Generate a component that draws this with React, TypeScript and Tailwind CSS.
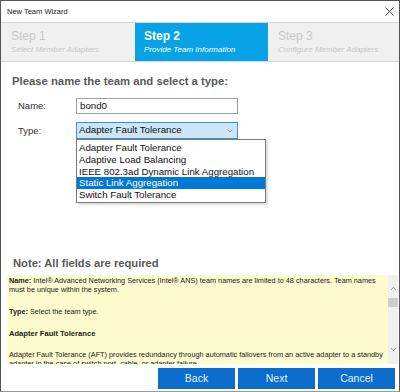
import { ChevronDown, ChevronUp } from "lucide-react";

const teamTypes = [
  "Adapter Fault Tolerance",
  "Adaptive Load Balancing",
  "IEEE 802.3ad Dynamic Link Aggregation",
  "Static Link Aggregation",
  "Switch Fault Tolerance",
];

const steps = [
  { title: "Step 1", sub: "Select Member Adapters", active: false },
  { title: "Step 2", sub: "Provide Team Information", active: true },
  { title: "Step 3", sub: "Configure Member Adapters", active: false },
];

export default function App() {
  return (
    <div
      className="flex h-[392px] w-[400px] flex-col overflow-hidden border border-[#555] border-b-[#9a9a9a] bg-white text-[#333]"
      style={{ fontFamily: '"Liberation Sans", Arial, sans-serif' }}
    >
      {/* title bar */}
      <div className="flex h-[21px] shrink-0 items-center justify-between pl-[6px] pr-[5px]">
        <span className="text-[7.5px] text-[#222]">New Team Wizard</span>
        <svg width="9" height="9" viewBox="0 0 9 9" className="text-[#333]">
          <path d="M0.5 0.5 L8.5 8.5 M8.5 0.5 L0.5 8.5" stroke="currentColor" strokeWidth="0.9" />
        </svg>
      </div>

      {/* steps */}
      <div className="grid h-[40px] shrink-0 grid-cols-[134px_133px_1fr] border-y border-[#d6d6d6] bg-[#f0f0f0]">
        {steps.map((s) => (
          <div
            key={s.title}
            className={
              s.active
                ? "flex flex-col justify-center bg-[#08a2e6] pl-[9px] text-white"
                : "flex flex-col justify-center pl-[10px] text-[#c8c8c8]"
            }
          >
            <span className={s.active ? "text-[12px] font-bold leading-[14px]" : "text-[12px] leading-[14px]"}>
              {s.title}
            </span>
            <span className="mt-[2px] text-[8px] italic leading-[10px]">{s.sub}</span>
          </div>
        ))}
      </div>

      {/* form */}
      <div className="relative flex flex-1 flex-col">
        <h1 className="mt-[13px] pl-[11px] text-[11.3px] font-bold leading-[13px] text-[#595959]">
          Please name the team and select a type:
        </h1>

        <div className="mt-[10px] flex items-center">
          <span className="w-[75px] shrink-0 pl-[17px] text-[9.5px]">Name:</span>
          <div className="flex h-[16px] w-[162px] items-center border border-[#a0a0a0] pl-[3px] text-[9.7px] text-[#111]">
            bond0
          </div>
        </div>

        <div className="mt-[8px] flex items-start">
          <span className="w-[75px] shrink-0 pl-[17px] pt-[2px] text-[9.5px]">Type:</span>
          <div className="relative">
            <div className="flex h-[17px] w-[162px] items-center justify-between border border-[#3d8ed8] bg-[#cde6f7] pl-[2px] pr-[3px] text-[9.7px] text-[#111]">
              <span>Adapter Fault Tolerance</span>
              <ChevronDown size={8} strokeWidth={1.5} className="text-[#555]" />
            </div>
            <ul className="absolute left-0 top-[17px] z-10 w-[190px] border border-[#7a7a7a] bg-white pb-[1px] pt-[2px] text-[9.7px] leading-[11.8px] text-[#111] shadow-[2px_2px_2px_rgba(0,0,0,0.15)]">
              {teamTypes.map((t) => (
                <li
                  key={t}
                  className={t === "Static Link Aggregation" ? "bg-[#0078d7] pl-[2px] text-white" : "pl-[2px]"}
                >
                  {t}
                </li>
              ))}
            </ul>
          </div>
        </div>

        <p className="mt-auto pl-[12px] text-[11.2px] font-bold leading-[13px] text-[#595959]">
          Note: All fields are required
        </p>

        {/* help panel */}
        <div className="mt-[5px] flex h-[89px] pl-[6px] pr-[1px]">
          <div className="flex-1 overflow-hidden bg-[#fcfccf] pl-[2px] pr-[3px] pt-[1px] text-[7.3px] leading-[9px] text-[#222]">
            <p>
              <b>Name:</b> Intel® Advanced Networking Services (Intel® ANS) team names are limited to 48
              characters. Team names must be unique within the system.
            </p>
            <p className="mt-[13px]">
              <b>Type:</b> Select the team type.
            </p>
            <p className="mt-[13px] text-[7.6px] font-bold">Adapter Fault Tolerance</p>
            <p className="mt-[12px]">
              Adapter Fault Tolerance (AFT) provides redundancy through automatic failovers from an active adapter
              to a standby adapter in the case of switch port, cable, or adapter failure.
            </p>
          </div>
          <div className="flex w-[10px] flex-col items-center bg-[#f0f0f0]">
            <ChevronUp size={9} strokeWidth={1.6} className="mt-[9px] text-[#555]" />
            <div className="mt-[5px] h-[9px] w-[10px] bg-[#cdcdcd]" />
            <ChevronDown size={9} strokeWidth={1.6} className="mt-auto mb-[10px] text-[#555]" />
          </div>
        </div>

        {/* buttons */}
        <div className="mb-[2px] mt-[4px] flex justify-end gap-[3px] pr-[4px]">
          {["Back", "Next", "Cancel"].map((b) => (
            <button
              key={b}
              className="h-[21px] w-[77px] bg-[#0b6dcc] text-[10.5px] text-[#eaf2ff]"
            >
              {b}
            </button>
          ))}
        </div>
      </div>
    </div>
  );
}
